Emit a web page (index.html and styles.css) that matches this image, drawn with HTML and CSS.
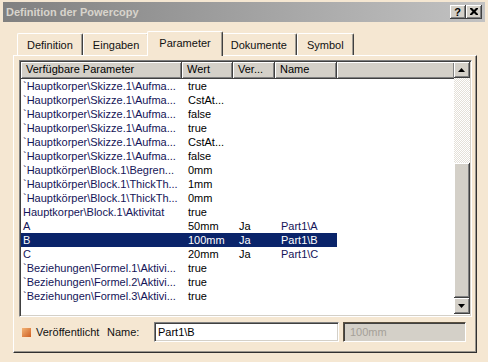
FILE: index.html
```html
<!DOCTYPE html>
<html lang="de">
<head>
    <meta charset="UTF-8">
    <title>Definition der Powercopy</title>
    <link rel="stylesheet" href="styles.css">
</head>
<body>
    <div class="window">
        <div class="titlebar">
            <span class="title">Definition der Powercopy</span>
            <div class="title-buttons">
                <span class="tbtn">?</span>
                <span class="tbtn">
                    <svg width="8" height="7" viewBox="0 0 8 7"><path d="M0 0h2l2 2 2-2h2v1l-2.5 2.5 2.5 2.5v1h-2l-2-2-2 2h-2v-1l2.5-2.5-2.5-2.5z" fill="#000"/></svg>
                </span>
            </div>
        </div>

        <div class="tabs">
            <div class="tab">Definition</div>
            <div class="tab">Eingaben</div>
            <div class="tab active">Parameter</div>
            <div class="tab">Dokumente</div>
            <div class="tab">Symbol</div>
        </div>

        <div class="panel">
            <div class="listbox">
                <div class="list">
                    <div class="head">
                        <span class="c1">Verfügbare Parameter</span>
                        <span class="c2">Wert</span>
                        <span class="c3">Ver...</span>
                        <span class="c4">Name</span>
                        <span class="c5"></span>
                    </div>
                    <div class="row"><span class="c1">`Hauptkorper\Skizze.1\Aufma...</span><span class="c2">true</span><span class="c3"></span><span class="c4"></span></div>
                    <div class="row"><span class="c1">`Hauptkorper\Skizze.1\Aufma...</span><span class="c2">CstAt...</span><span class="c3"></span><span class="c4"></span></div>
                    <div class="row"><span class="c1">`Hauptkorper\Skizze.1\Aufma...</span><span class="c2">false</span><span class="c3"></span><span class="c4"></span></div>
                    <div class="row"><span class="c1">`Hauptkorper\Skizze.1\Aufma...</span><span class="c2">true</span><span class="c3"></span><span class="c4"></span></div>
                    <div class="row"><span class="c1">`Hauptkorper\Skizze.1\Aufma...</span><span class="c2">CstAt...</span><span class="c3"></span><span class="c4"></span></div>
                    <div class="row"><span class="c1">`Hauptkorper\Skizze.1\Aufma...</span><span class="c2">false</span><span class="c3"></span><span class="c4"></span></div>
                    <div class="row"><span class="c1">`Hauptkörper\Block.1\Begren...</span><span class="c2">0mm</span><span class="c3"></span><span class="c4"></span></div>
                    <div class="row"><span class="c1">`Hauptkörper\Block.1\ThickTh...</span><span class="c2">1mm</span><span class="c3"></span><span class="c4"></span></div>
                    <div class="row"><span class="c1">`Hauptkörper\Block.1\ThickTh...</span><span class="c2">0mm</span><span class="c3"></span><span class="c4"></span></div>
                    <div class="row"><span class="c1">Hauptkorper\Block.1\Aktivitat</span><span class="c2">true</span><span class="c3"></span><span class="c4"></span></div>
                    <div class="row"><span class="c1">A</span><span class="c2">50mm</span><span class="c3">Ja</span><span class="c4">Part1\A</span></div>
                    <div class="row selected"><span class="c1">B</span><span class="c2">100mm</span><span class="c3">Ja</span><span class="c4">Part1\B</span></div>
                    <div class="row"><span class="c1">C</span><span class="c2">20mm</span><span class="c3">Ja</span><span class="c4">Part1\C</span></div>
                    <div class="row"><span class="c1">`Beziehungen\Formel.1\Aktivi...</span><span class="c2">true</span><span class="c3"></span><span class="c4"></span></div>
                    <div class="row"><span class="c1">`Beziehungen\Formel.2\Aktivi...</span><span class="c2">true</span><span class="c3"></span><span class="c4"></span></div>
                    <div class="row"><span class="c1">`Beziehungen\Formel.3\Aktivi...</span><span class="c2">true</span><span class="c3"></span><span class="c4"></span></div>
                </div>
                <div class="scrollbar">
                    <div class="sbtn">
                        <svg width="7" height="4" viewBox="0 0 7 4"><path d="M3.5 0L7 4H0z" fill="#000"/></svg>
                    </div>
                    <div class="track"></div>
                    <div class="thumb"></div>
                    <div class="sbtn">
                        <svg width="7" height="4" viewBox="0 0 7 4"><path d="M0 0h7L3.5 4z" fill="#000"/></svg>
                    </div>
                </div>
            </div>

            <div class="bottom">
                <span class="check"></span>
                <span class="label pub">Veröffentlicht</span>
                <span class="label name">Name:</span>
                <div class="input">Part1\B</div>
                <div class="input disabled">100mm</div>
            </div>
        </div>
    </div>
</body>
</html>
```

FILE: styles.css
```css
* {
    margin: 0;
    padding: 0;
    box-sizing: border-box;
}

body {
    width: 488px;
    height: 362px;
    overflow: hidden;
    background: #f5e7d2;
    font-family: "Liberation Sans", Arial, sans-serif;
    font-size: 11px;
    color: #000;
}

.window {
    height: 362px;
    padding-top: 2px;
}

/* barra de titulo (ventana inactiva) */
.titlebar {
    height: 20px;
    margin: 0 3px;
    padding: 0 3px;
    display: flex;
    align-items: center;
    justify-content: space-between;
    background: linear-gradient(to right, #808080, #c2c2c2);
}

.title {
    font-weight: bold;
    color: #d8d4cc;
}

.title-buttons {
    display: flex;
}

.tbtn {
    width: 16px;
    height: 14px;
    display: flex;
    justify-content: center;
    align-items: center;
    background: #d4d0c8;
    border-right: 1px solid #404040;
    border-bottom: 1px solid #404040;
    box-shadow: inset 1px 1px #fff, inset -1px -1px #808080;
    font-weight: bold;
    font-size: 11px;
}

/* pestañas */
.tabs {
    height: 24px;
    margin-top: 9px;
    padding-left: 17px;
    display: flex;
    align-items: flex-end;
}

.tab {
    height: 22px;
    padding: 0 9px;
    display: flex;
    align-items: center;
    border-top: 1px solid #fff;
    border-left: 1px solid #fff;
    border-right: 1px solid #404040;
    border-radius: 2px 2px 0 0;
    box-shadow: inset -1px 0 #a09c94;
    color: #111;
}

.tab.active {
    height: 25px;
    margin: 0 -2px -1px;
    padding: 0 11px 2px;
    background: #f5e7d2;
    position: relative;
    z-index: 1;
}

.panel {
    height: 298px;
    margin: 0 11px 0 13px;
    padding: 4px 4px 0 5px;
    border-top: 1px solid #fff;
    border-left: 1px solid #fff;
    border-right: 1px solid #303030;
    border-bottom: 1px solid #303030;
    box-shadow: inset -1px -1px #9a968e;
}

/* lista de parametros */
.listbox {
    height: 257px;
    display: flex;
    border-top: 1px solid #808080;
    border-left: 1px solid #808080;
    border-right: 1px solid #fff;
    border-bottom: 1px solid #fff;
    box-shadow: inset 1px 1px #404040, inset -1px -1px #d4d0c8;
    padding: 1px;
    background: #fff;
}

.list {
    flex: 1;
    overflow: hidden;
}

.head {
    height: 17px;
    display: flex;
    background: #d4d0c8;
}

.head span {
    height: 17px;
    line-height: 15px;
    padding-left: 5px;
    border-right: 1px solid #404040;
    border-bottom: 1px solid #404040;
    box-shadow: inset 1px 1px #fff, inset -1px -1px #808080;
    white-space: nowrap;
    overflow: hidden;
}

.head .c5 {
    flex: 1;
    border-right: none;
}

.row {
    height: 14px;
    display: flex;
}

.row span {
    line-height: 14px;
    padding-left: 6px;
    white-space: nowrap;
    overflow: hidden;
}

.row .c1 {
    padding-left: 2px;
    color: #141458;
}

.row .c4 {
    color: #141458;
}

.c1 { width: 161px; }
.c2 { width: 51px; }
.c3 { width: 42px; }
.c4 { width: 62px; }

.row.selected span {
    background: #0a246a;
    color: #fff;
}

/* barra de desplazamiento */
.scrollbar {
    width: 16px;
    display: flex;
    flex-direction: column;
}

.sbtn,
.thumb {
    background: #d4d0c8;
    border-right: 1px solid #404040;
    border-bottom: 1px solid #404040;
    box-shadow: inset 1px 1px #fff, inset -1px -1px #808080;
}

.sbtn {
    height: 16px;
    display: flex;
    justify-content: center;
    align-items: center;
}

.track {
    height: 85px;
    background: repeating-conic-gradient(#e4e0d8 0 25%, #fff 0 50%) 0 0 / 2px 2px;
}

.thumb {
    height: 135px;
}

/* fila inferior */
.bottom {
    height: 20px;
    margin-top: 5px;
    display: flex;
    align-items: center;
}

.check {
    width: 11px;
    height: 11px;
    margin-left: 2px;
    border: 1px solid #fbe6cc;
    background: linear-gradient(135deg, #f2b476, #cf5e22);
}

.label {
    color: #111;
}

.pub {
    width: 71px;
    margin-left: 4px;
}

.name {
    width: 47px;
}

.input {
    height: 20px;
    width: 185px;
    padding-left: 3px;
    line-height: 18px;
    background: #fff;
    border-top: 1px solid #808080;
    border-left: 1px solid #808080;
    border-right: 1px solid #fff;
    border-bottom: 1px solid #fff;
    box-shadow: inset 1px 1px #404040, inset -1px -1px #d4d0c8;
}

.input.disabled {
    width: 123px;
    margin-left: 4px;
    padding-left: 6px;
    background: #d4d0c8;
    color: #a4a098;
    border-top-color: #5a5040;
    border-left-color: #5a5040;
}
```
